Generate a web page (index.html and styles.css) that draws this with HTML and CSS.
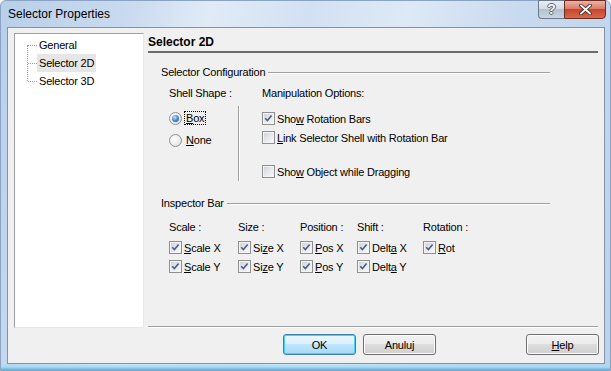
FILE: index.html
```html
<!DOCTYPE html>
<html lang="en">
<head>
    <meta charset="UTF-8">
    <title>Selector Properties</title>
    <link rel="stylesheet" href="styles.css">
</head>
<body>
    <div class="window">
        <div class="titlebar">
            <span class="caption">Selector Properties</span>
            <div class="caption-buttons">
                <div class="cap-btn help"><span>?</span></div>
                <div class="cap-btn close">
                    <svg width="13" height="11" viewBox="0 0 13 11">
                        <path d="M2 1.5 L11 9.5 M11 1.5 L2 9.5" stroke="#4a2a24" stroke-width="3.6" stroke-linecap="square"/>
                        <path d="M2 1.5 L11 9.5 M11 1.5 L2 9.5" stroke="#ffffff" stroke-width="1.8" stroke-linecap="square"/>
                    </svg>
                </div>
            </div>
        </div>

        <div class="client">
            <div class="main">
                <div class="tree">
                    <ul>
                        <li><span>General</span></li>
                        <li class="selected"><span>Selector 2D</span></li>
                        <li><span>Selector 3D</span></li>
                    </ul>
                </div>

                <div class="page">
                    <div class="page-title">Selector 2D</div>

                    <div class="group">
                        <div class="group-title"><span>Selector Configuration</span></div>
                        <div class="config">
                            <div class="col-label">Shell Shape :</div>
                            <div></div>
                            <div class="col-label">Manipulation Options:</div>

                            <div class="radios">
                                <div class="radio-row"><span class="radio checked"></span><span class="focus"><u>B</u>ox</span></div>
                                <div class="radio-row"><span class="radio"></span><span class="plain"><u>N</u>one</span></div>
                            </div>
                            <div class="vsep"></div>
                            <div class="checks">
                                <div class="check"><span class="box"><svg width="11" height="11" viewBox="0 0 11 11"><path d="M2.2 5.2 L4.4 7.6 L8.6 2.4"/></svg></span><span>Sho<u>w</u> Rotation Bars</span></div>
                                <div class="check"><span class="box"></span><span><u>L</u>ink Selector Shell with Rotation Bar</span></div>
                                <div class="check spaced"><span class="box"></span><span>Sho<u>w</u> Object while Dragging</span></div>
                            </div>
                        </div>
                    </div>

                    <div class="group inspector-group">
                        <div class="group-title"><span>Inspector Bar</span></div>
                        <div class="inspector">
                            <div class="col-label">Scale :</div>
                            <div class="col-label">Size :</div>
                            <div class="col-label">Position :</div>
                            <div class="col-label">Shift :</div>
                            <div class="col-label">Rotation :</div>

                            <div class="check"><span class="box"><svg width="11" height="11" viewBox="0 0 11 11"><path d="M2.2 5.2 L4.4 7.6 L8.6 2.4"/></svg></span><span><u>S</u>cale X</span></div>
                            <div class="check"><span class="box"><svg width="11" height="11" viewBox="0 0 11 11"><path d="M2.2 5.2 L4.4 7.6 L8.6 2.4"/></svg></span><span>Si<u>z</u>e X</span></div>
                            <div class="check"><span class="box"><svg width="11" height="11" viewBox="0 0 11 11"><path d="M2.2 5.2 L4.4 7.6 L8.6 2.4"/></svg></span><span><u>P</u>os X</span></div>
                            <div class="check"><span class="box"><svg width="11" height="11" viewBox="0 0 11 11"><path d="M2.2 5.2 L4.4 7.6 L8.6 2.4"/></svg></span><span>Delt<u>a</u> X</span></div>
                            <div class="check"><span class="box"><svg width="11" height="11" viewBox="0 0 11 11"><path d="M2.2 5.2 L4.4 7.6 L8.6 2.4"/></svg></span><span><u>R</u>ot</span></div>

                            <div class="check"><span class="box"><svg width="11" height="11" viewBox="0 0 11 11"><path d="M2.2 5.2 L4.4 7.6 L8.6 2.4"/></svg></span><span><u>S</u>cale Y</span></div>
                            <div class="check"><span class="box"><svg width="11" height="11" viewBox="0 0 11 11"><path d="M2.2 5.2 L4.4 7.6 L8.6 2.4"/></svg></span><span>Si<u>z</u>e Y</span></div>
                            <div class="check"><span class="box"><svg width="11" height="11" viewBox="0 0 11 11"><path d="M2.2 5.2 L4.4 7.6 L8.6 2.4"/></svg></span><span><u>P</u>os Y</span></div>
                            <div class="check"><span class="box"><svg width="11" height="11" viewBox="0 0 11 11"><path d="M2.2 5.2 L4.4 7.6 L8.6 2.4"/></svg></span><span>Delt<u>a</u> Y</span></div>
                            <div></div>
                        </div>
                    </div>
                </div>
            </div>

            <div class="buttons">
                <div class="btn default">OK</div>
                <div class="btn">Anuluj</div>
                <div class="btn help-btn"><span><u>H</u>elp</span></div>
            </div>
        </div>
    </div>
</body>
</html>
```

FILE: styles.css
```css
body {
    margin: 0;
    font-family: "Liberation Sans", Arial, sans-serif;
    font-size: 11px;
    color: #000;
}
.window {
    width: 611px;
    height: 371px;
    box-sizing: border-box;
    border: 1px solid #8aa3c2;
    border-radius: 6px 6px 0 0;
    display: flex;
    flex-direction: column;
    background:
        linear-gradient(to bottom, rgba(255, 255, 255, 0) 362px, #a6daf6 366px, #4bb6ea 369px),
        linear-gradient(105deg, #b9cfe9 0%, #c8daef 18%, #e0ebf7 30%, #d2e1f2 44%, #dde9f6 58%, #c8daef 74%, #bcd2eb 100%);
}
.titlebar {
    height: 26px;
    display: flex;
    justify-content: space-between;
    align-items: flex-start;
    padding: 0 4px 0 7px;
}
.caption {
    font-size: 12px;
    line-height: 26px;
    color: #000;
}
.caption-buttons {
    display: flex;
    margin-top: -1px;
}
.cap-btn {
    height: 19px;
    box-sizing: border-box;
    display: flex;
    align-items: center;
    justify-content: center;
}
.help {
    width: 26px;
    border: 1px solid #6c7a8b;
    border-right: none;
    border-radius: 0 0 0 4px;
    background: linear-gradient(to bottom, #e7edf3 0%, #d3dce6 45%, #b4c2d1 50%, #c9d4df 100%);
}
.help span {
    font-weight: bold;
    font-size: 14px;
    color: #f1f4f7;
    text-shadow: -1px 0 #5b6878, 1px 0 #5b6878, 0 -1px #5b6878, 0 1px #5b6878;
    line-height: 17px;
}
.close {
    width: 42px;
    border: 1px solid #6e2c21;
    border-radius: 0 0 4px 0;
    background: linear-gradient(to bottom, #eab1a4 0%, #dc7d69 45%, #c8452c 50%, #d66a4f 100%);
}
.close svg {
    display: block;
}
.client {
    flex: 1;
    margin: 0 5px 6px 6px;
    border: 1px solid #7f93ad;
    background: #f0f0f0;
    display: flex;
    flex-direction: column;
}
.main {
    display: flex;
    padding: 5px 0 0 6px;
}
.tree {
    width: 130px;
    height: 295px;
    box-sizing: border-box;
    background: #fff;
    border: 1px solid;
    border-color: #a0a0a0 #e8e8e8 #e8e8e8 #a0a0a0;
}
.tree ul {
    list-style: none;
    margin: 0;
    padding: 2px 0 0 0;
    position: relative;
}
.tree ul::before {
    content: "";
    position: absolute;
    left: 12px;
    top: 11px;
    height: 36px;
    border-left: 1px dotted #a0a0a0;
}
.tree li {
    position: relative;
    height: 18px;
    line-height: 18px;
    padding-left: 22px;
    letter-spacing: -0.2px;
}
.tree li::before {
    content: "";
    position: absolute;
    left: 13px;
    top: 9px;
    width: 9px;
    border-top: 1px dotted #a0a0a0;
}
.tree li span {
    display: inline-block;
    padding: 0 2px;
}
.tree li.selected span {
    background: #e6e6e6;
}
.page {
    width: 450px;
    height: 294px;
    box-sizing: border-box;
    margin-left: 4px;
    border-bottom: 1px solid #a0a0a0;
    box-shadow: 0 1px 0 #fff;
}
.page-title {
    font-size: 12px;
    font-weight: bold;
    line-height: 17px;
    padding-top: 1px;
    border-bottom: 2px solid #6b6b6b;
}
.group {
    margin: 12px 48px 0 13px;
    letter-spacing: -0.2px;
}
.group-title {
    display: flex;
    align-items: center;
    line-height: 14px;
}
.group-title::after {
    content: "";
    flex: 1;
    margin-left: 3px;
    margin-top: 2px;
    border-top: 1px solid #a0a0a0;
    border-bottom: 1px solid #fff;
}
.col-label {
    line-height: 14px;
}
.config {
    display: grid;
    grid-template-columns: 69px 24px 1fr;
    row-gap: 7px;
    margin-top: 7px;
    padding-left: 8px;
}
.radio-row {
    height: 22px;
    display: flex;
    align-items: center;
}
.radio {
    width: 13px;
    height: 13px;
    box-sizing: border-box;
    border-radius: 50%;
    border: 1px solid #8c8f92;
    background: radial-gradient(circle at 35% 35%, #ffffff 0%, #f2f2f2 40%, #d6d8db 100%);
    display: flex;
    align-items: center;
    justify-content: center;
    margin-right: 2px;
}
.radio.checked::after {
    content: "";
    width: 7px;
    height: 7px;
    border-radius: 50%;
    background: radial-gradient(circle at 40% 35%, #cfe8fb 0%, #4d8fd6 45%, #1f4f97 100%);
}
.focus {
    border: 1px dotted #000;
    padding: 0 1px;
    line-height: 12px;
}
.plain {
    padding: 0 2px;
    line-height: 14px;
}
.vsep {
    width: 0;
    border-left: 1px solid #a0a0a0;
    border-right: 1px solid #fff;
    margin-top: -1px;
}
.checks {
    padding-top: 2px;
}
.check {
    height: 19px;
    display: flex;
    align-items: center;
    white-space: nowrap;
}
.check.spaced {
    margin-top: 15px;
}
.box {
    width: 13px;
    height: 13px;
    box-sizing: border-box;
    border: 1px solid #8e8f8f;
    box-shadow: inset 0 0 0 1px #f4f4f4;
    background: linear-gradient(135deg, #cdd0d5 0%, #e6e8ea 50%, #fafafa 100%);
    margin-right: 2px;
    flex: none;
}
.box svg {
    display: block;
}
.box path {
    fill: none;
    stroke: #4b5e8c;
    stroke-width: 1.6;
}
.inspector-group {
    margin-top: 15px;
}
.inspector {
    display: grid;
    grid-template-columns: 69px 62px 57px 66px auto;
    grid-template-rows: 18px 19px 19px;
    margin-top: 10px;
    padding-left: 8px;
}
.buttons {
    display: flex;
    gap: 7px;
    margin-top: 6px;
    padding: 0 5px 0 275px;
}
.btn {
    width: 73px;
    height: 21px;
    box-sizing: border-box;
    border: 1px solid #707070;
    border-radius: 3px;
    background: linear-gradient(to bottom, #f2f2f2 0%, #ebebeb 50%, #dddddd 50%, #cfcfcf 100%);
    box-shadow: inset 0 0 0 1px #fcfcfc;
    display: flex;
    align-items: center;
    justify-content: center;
    letter-spacing: -0.2px;
}
.btn.default {
    border-color: #3c7fb1;
    background: linear-gradient(to bottom, #eaf6fd 0%, #d9f0fc 50%, #bee6fd 50%, #a7d9f5 100%);
    box-shadow: inset 0 0 0 1px #48d0fa;
}
.help-btn {
    margin-left: auto;
}
```
